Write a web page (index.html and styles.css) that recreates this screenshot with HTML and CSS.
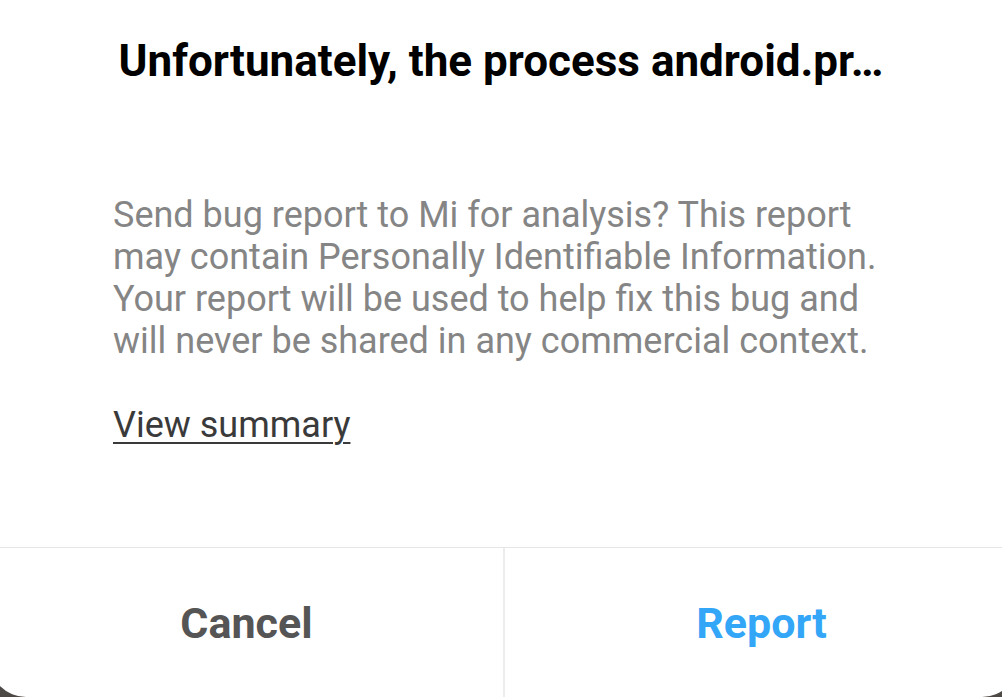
FILE: index.html
```html
<!DOCTYPE html>
<html lang="en">

<head>
    <meta charset="UTF-8">
    <meta name="viewport" content="width=device-width, initial-scale=1.0">
    <title>Bug report</title>
    <link rel="stylesheet" href="styles.css">
</head>

<body>
    <div class="dialog">
        <h2 class="title">Unfortunately, the process android.pr…</h2>

        <p class="message">Send bug report to Mi for analysis? This report may contain Personally Identifiable Information. Your report will be used to help fix this bug and will never be shared in any commercial context.</p>

        <a class="summary" href="#">View summary</a>

        <div class="actions">
            <button class="cancel">Cancel</button>
            <button class="report">Report</button>
        </div>
    </div>
</body>

</html>
```

FILE: styles.css
```css
html,
body {
    margin: 0;
    padding: 0;
    height: 100vh;
    overflow: hidden;
}

body {
    font-family: 'Roboto', 'Noto Sans', sans-serif;
    background: #4d4945;
}

.dialog {
    margin: 0 -16px 0 -10px;
    height: 697px;
    background: #fff;
    border-radius: 0 0 36px 36px;
    display: flex;
    flex-direction: column;
}

.title {
    margin: 0;
    padding: 35px 16px 0 10px;
    font-size: 44px;
    line-height: 52px;
    font-weight: bold;
    color: #000;
    text-align: center;
}

.message {
    margin: 107px 0 0 123px;
    width: 800px;
    font-size: 36px;
    line-height: 42px;
    color: #858585;
}

.summary {
    align-self: flex-start;
    margin: 42px 0 0 123px;
    font-size: 36px;
    line-height: 42px;
    color: #3a3a3a;
    text-decoration: underline;
    text-decoration-thickness: 2px;
    text-underline-offset: 5px;
}

.actions {
    margin-top: auto;
    height: 149px;
    border-top: 1px solid #e6e6e6;
    display: flex;
}

.actions button {
    flex: 1;
    border: none;
    background: none;
    font-family: inherit;
    font-size: 43px;
    line-height: 50px;
    font-weight: bold;
    padding: 50px 0 0;
    display: flex;
    justify-content: center;
    align-items: flex-start;
}

.cancel {
    color: #555;
    border-right: 2px solid #ececec !important;
}

.report {
    color: #33a6f7;
}
```
